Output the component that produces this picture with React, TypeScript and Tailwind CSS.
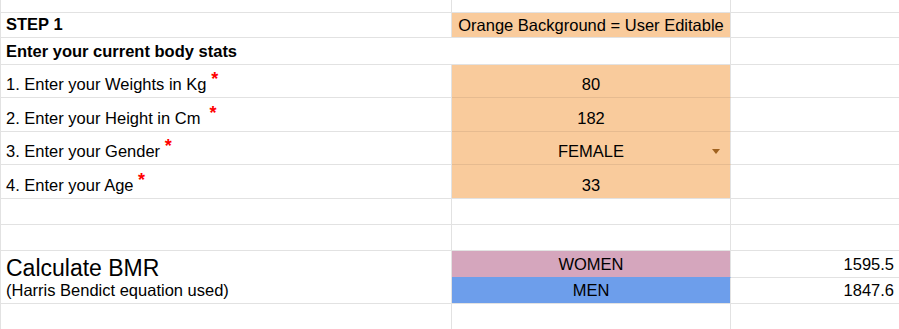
import React from 'react';

const line = 'border-[#e2e2e2]';

const Star = ({ gap = ' ' }: { gap?: string }) => (
  <span className="whitespace-pre">
    {gap}
    <span className="align-[5px] text-[18px] font-bold text-[#ff0000]">*</span>
  </span>
);

const Dropdown = () => (
  <svg
    className="absolute right-[10px] top-[17px]"
    width="8"
    height="5"
    viewBox="0 0 8 5"
  >
    <path d="M0 0 H8 L4 5 Z" fill="#a0621f" />
  </svg>
);

export default function App() {
  const inputs = [
    { label: '1. Enter your Weights in Kg', value: '80', gap: ' ' },
    { label: '2. Enter your Height in Cm', value: '182', gap: '  ' },
    { label: '3. Enter your Gender', value: 'FEMALE', gap: ' ', select: true },
    { label: '4. Enter your Age', value: '33', gap: ' ' },
  ];

  const cellA = `border-l border-r border-t ${line} flex items-end pl-[5px] pb-[3px]`;
  const cellB = `border-r border-t ${line} flex items-end justify-center pb-[3px]`;
  const cellC = `border-t ${line}`;

  return (
    <div className="w-[899px] h-[329px] overflow-hidden bg-white font-['Liberation_Sans',Arial,sans-serif] text-[16.5px] leading-[19px] text-black">
      <div className="grid grid-cols-[452px_279px_1fr] grid-rows-[12px_25px_27px_33px_34px_33px_34px_26px_26px_27px_26px_26px]">
        {/* top partial row */}
        <div className={`border-l border-r ${line}`} />
        <div className={`border-r ${line}`} />
        <div />

        {/* STEP 1 */}
        <div className={`${cellA} pb-[2px] font-bold`}>STEP 1</div>
        <div className={`border-t ${line} border-r flex items-end justify-center pb-[2px] bg-[#f9cb9c]`}>
          Orange Background = User Editable
        </div>
        <div className={cellC} />

        {/* heading */}
        <div className={`border-l border-t ${line} flex items-end pl-[5px] pb-[3px] font-bold whitespace-nowrap`}>
          Enter your current body stats
        </div>
        <div className={`border-r border-t ${line}`} />
        <div className={cellC} />

        {inputs.map((row, i) => (
          <React.Fragment key={row.label}>
            <div className={`${cellA} whitespace-nowrap`}>
              {row.label}
              <Star gap={row.gap} />
            </div>
            <div
              className={`${cellB} relative bg-[#f9cb9c] ${i === 0 ? '' : 'border-t-[#e6bb90]'}`}
            >
              {row.value}
              {row.select && <Dropdown />}
            </div>
            <div className={cellC} />
          </React.Fragment>
        ))}

        {/* empty rows */}
        {[0, 1].map((k) => (
          <React.Fragment key={k}>
            <div className={cellA} />
            <div className={cellB} />
            <div className={cellC} />
          </React.Fragment>
        ))}

        {/* BMR */}
        <div className={`row-span-2 border-l border-r border-t ${line} flex flex-col justify-end pl-[5px] pb-[3px]`}>
          <div className="text-[23px] leading-[26px]">Calculate BMR</div>
          <div>(Harris Bendict equation used)</div>
        </div>
        <div className={`${cellB} bg-[#d5a6bd]`}>WOMEN</div>
        <div className={`${cellC} flex items-end justify-end pr-[5px] pb-[3px]`}>1595.5</div>

        <div className={`border-r border-t border-t-[#6d9eeb] ${line} flex items-end justify-center pb-[3px] bg-[#6d9eeb]`}>
          MEN
        </div>
        <div className={`${cellC} flex items-end justify-end pr-[5px] pb-[3px]`}>1847.6</div>

        {/* bottom row */}
        <div className={`border-l border-r border-t ${line}`} />
        <div className={`border-r border-t ${line}`} />
        <div className={cellC} />
      </div>
    </div>
  );
}
